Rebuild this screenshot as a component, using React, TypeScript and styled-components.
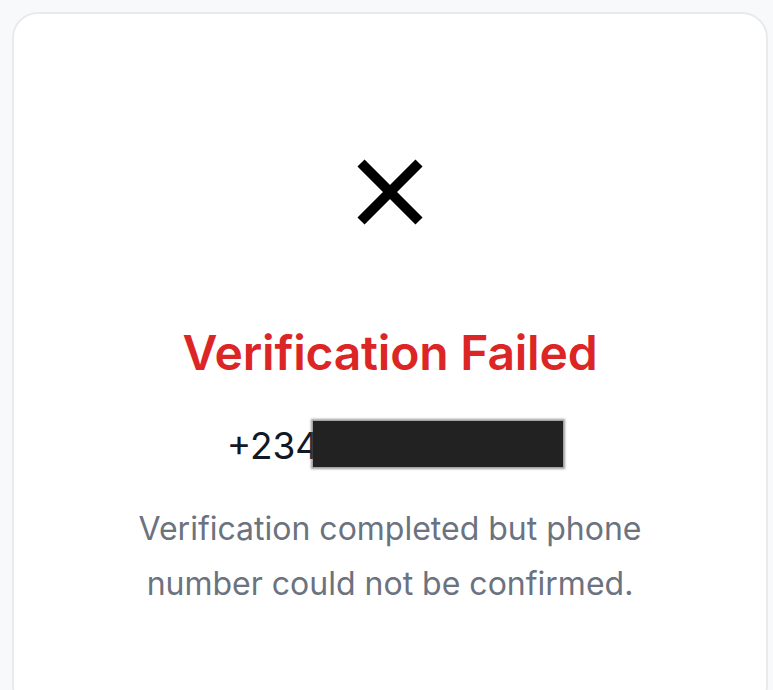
import * as React from "react";
import styled, { createGlobalStyle } from "styled-components";

const GlobalStyle = createGlobalStyle`
  html, body {
    margin: 0;
    padding: 0;
    background: #f8f9fa;
    overflow: hidden;
  }
  body {
    font-family: Inter, "Noto Sans", "Liberation Sans", sans-serif;
    -webkit-font-smoothing: antialiased;
  }
`;

const Page = styled.div`
  padding: 12px 5px 0 12px;
  height: 690px;
  box-sizing: border-box;
`;

const Card = styled.div`
  box-sizing: border-box;
  height: 700px;
  background: #ffffff;
  border: 2px solid #e8eaed;
  border-radius: 26px;
  display: flex;
  flex-direction: column;
  align-items: center;
  padding-top: 145px;
`;

const IconWrap = styled.div`
  width: 66px;
  height: 66px;
  margin-bottom: 99px;
`;

const Title = styled.h1`
  margin: 0;
  font-size: 48px;
  font-weight: 600;
  line-height: 58px;
  color: #dc2626;
  letter-spacing: -0.2px;
`;

const Phone = styled.div`
  margin-top: 40px;
  padding-left: 10px;
  display: flex;
  align-items: center;
  font-size: 37px;
  line-height: 48px;
  color: #111827;
`;

const Redacted = styled.span`
  display: inline-block;
  width: 250px;
  height: 46px;
  margin-left: -6px;
  margin-top: -4px;
  background: #222222;
  box-shadow: 0 0 2px 2px rgba(90, 90, 90, 0.6);
`;

const Message = styled.p`
  margin: 31px 0 0;
  max-width: 540px;
  text-align: center;
  font-size: 32px;
  line-height: 55px;
  color: #6b7280;
`;

const CrossIcon = () => (
  <svg width="66" height="66" viewBox="0 0 66 66">
    <path d="M4 4 L62 62 M62 4 L4 62" stroke="#000" strokeWidth="10" strokeLinecap="butt" />
  </svg>
);

export default function App() {
  return (
    <>
      <GlobalStyle />
      <Page>
        <Card>
          <IconWrap>
            <CrossIcon />
          </IconWrap>
          <Title>Verification Failed</Title>
          <Phone>
            +234
            <Redacted />
          </Phone>
          <Message>Verification completed but phone number could not be confirmed.</Message>
        </Card>
      </Page>
    </>
  );
}
